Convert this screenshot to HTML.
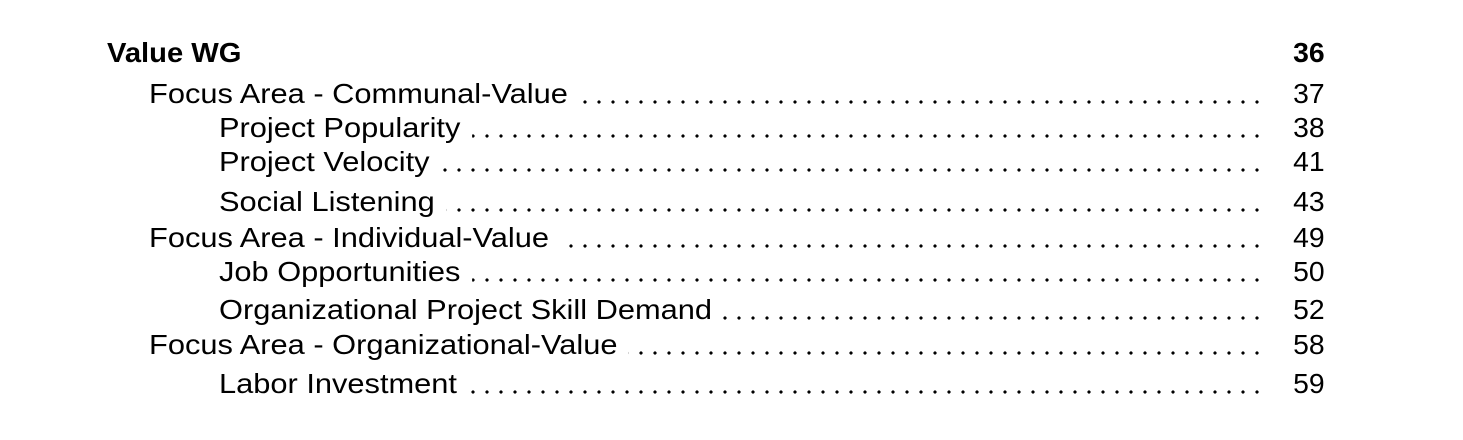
<!DOCTYPE html>
<html><head><meta charset="utf-8"><style>
body{margin:0;width:1463px;height:440px;background:#fff;font-family:"Liberation Sans",Arial,sans-serif;color:#000;overflow:hidden}
.r{position:absolute;left:0;width:1463px;height:36px;font-size:27.5px;line-height:36px}
.lead{position:absolute;right:199px;top:24px;height:4px;
background-image:radial-gradient(circle,#000 1.5px,transparent 1.8px);background-size:14px 4px;background-position:right 0 top 0;background-repeat:repeat-x}
.t{position:absolute;top:0;background:#fff;padding-right:10px;white-space:nowrap;transform:scaleX(1.12);transform-origin:left center}
.n{position:absolute;right:138px;top:0;transform:scaleX(1.03);transform-origin:right center}
.b{font-weight:bold}
.b .t{transform:scaleX(1.06)}
.i1 .lead{left:149px}.i2 .lead{left:219px}
</style></head><body>
<div class="r b" style="top:35px"><span class="t" style="left:107px">Value WG</span><span class="n">36</span></div>
<div class="r i1" style="top:76px"><div class="lead"></div><span class="t" style="left:149px">Focus Area - Communal-Value</span><span class="n">37</span></div>
<div class="r i2" style="top:110px"><div class="lead"></div><span class="t" style="left:219px">Project Popularity</span><span class="n">38</span></div>
<div class="r i2" style="top:144px"><div class="lead"></div><span class="t" style="left:219px">Project Velocity</span><span class="n">41</span></div>
<div class="r i2" style="top:184px"><div class="lead"></div><span class="t" style="left:219px">Social Listening</span><span class="n">43</span></div>
<div class="r i1" style="top:220px"><div class="lead"></div><span class="t" style="left:149px">Focus Area - Individual-Value</span><span class="n">49</span></div>
<div class="r i2" style="top:254px"><div class="lead"></div><span class="t" style="left:219px">Job Opportunities</span><span class="n">50</span></div>
<div class="r i2" style="top:292px"><div class="lead"></div><span class="t" style="left:219px">Organizational Project Skill Demand</span><span class="n">52</span></div>
<div class="r i1" style="top:327px"><div class="lead"></div><span class="t" style="left:149px">Focus Area - Organizational-Value</span><span class="n">58</span></div>
<div class="r i2" style="top:366px"><div class="lead"></div><span class="t" style="left:219px">Labor Investment</span><span class="n">59</span></div>
</body></html>
